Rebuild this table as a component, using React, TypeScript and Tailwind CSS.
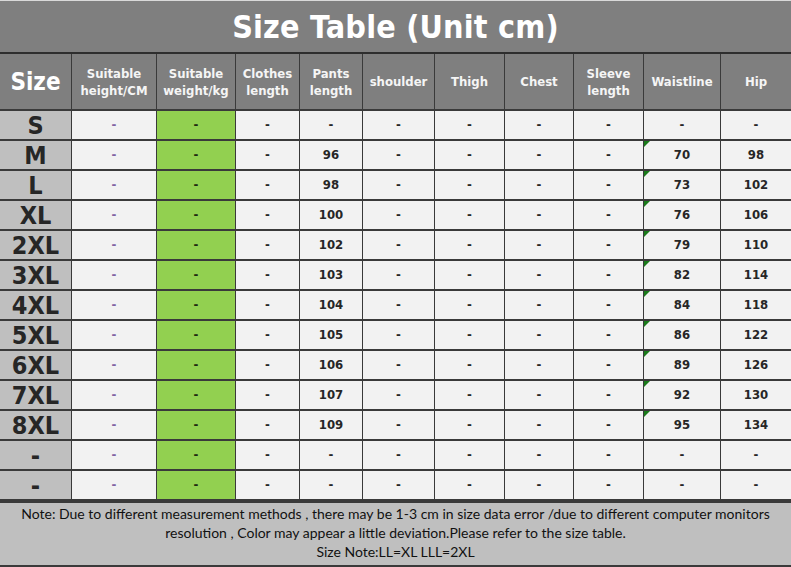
const cols = [
  'w-[72px]', 'w-[85px]', 'w-[79px]', 'w-[64px]', 'w-[63px]', 'w-[72px]',
  'w-[70px]', 'w-[69px]', 'w-[70px]', 'w-[77px]', 'w-[70px]',
];

const headers: string[][] = [
  ['Size'],
  ['Suitable', 'height/CM'],
  ['Suitable', 'weight/kg'],
  ['Clothes', 'length'],
  ['Pants', 'length'],
  ['shoulder'],
  ['Thigh'],
  ['Chest'],
  ['Sleeve', 'length'],
  ['Waistline'],
  ['Hip'],
];

type Row = { size: string; pants: string; waist: string; hip: string; mark: boolean };

const rows: Row[] = [
  { size: 'S', pants: '-', waist: '-', hip: '-', mark: false },
  { size: 'M', pants: '96', waist: '70', hip: '98', mark: true },
  { size: 'L', pants: '98', waist: '73', hip: '102', mark: true },
  { size: 'XL', pants: '100', waist: '76', hip: '106', mark: true },
  { size: '2XL', pants: '102', waist: '79', hip: '110', mark: true },
  { size: '3XL', pants: '103', waist: '82', hip: '114', mark: true },
  { size: '4XL', pants: '104', waist: '84', hip: '118', mark: true },
  { size: '5XL', pants: '105', waist: '86', hip: '122', mark: true },
  { size: '6XL', pants: '106', waist: '89', hip: '126', mark: true },
  { size: '7XL', pants: '107', waist: '92', hip: '130', mark: true },
  { size: '8XL', pants: '109', waist: '95', hip: '134', mark: true },
  { size: '-', pants: '-', waist: '-', hip: '-', mark: false },
  { size: '-', pants: '-', waist: '-', hip: '-', mark: false },
];

const tahoma = "font-['DejaVu_Sans_Condensed','DejaVu_Sans',sans-serif]";

function Cell({ i, className, children }: { i: number; className?: string; children?: React.ReactNode }) {
  return (
    <div
      className={`${cols[i]} relative shrink-0 flex items-center justify-center border-r border-[#3a3a3a] last:border-r-0 ${className ?? ''}`}
    >
      {children}
    </div>
  );
}

export default function App() {
  return (
    <div className={`w-[791px] h-[567px] bg-white ${tahoma}`}>
      <div className="h-[54px] bg-[#7f7f7f] border-t border-[#d9d9d9] border-b-2 border-b-[#2e2e2e] flex items-center justify-center">
        <h1 className="text-[32px] font-bold text-white tracking-[0.2px] leading-none">Size Table (Unit cm)</h1>
      </div>

      <div className="h-[57px] flex bg-[#7f7f7f] border-b-2 border-[#3a3a3a]">
        {headers.map((h, i) => (
          <Cell key={i} i={i}>
            {i === 0 ? (
              <span className="text-[24px] font-bold text-white">Size</span>
            ) : (
              <span className="text-[13px] font-bold text-[#f5f5f5] leading-[17px] text-center">
                {h.map((t, k) => (
                  <span key={k} className="block">{t}</span>
                ))}
              </span>
            )}
          </Cell>
        ))}
      </div>

      {rows.map((r, ri) => (
        <div key={ri} className="h-[30px] flex border-b-2 border-[#3a3a3a] last:border-b-0">
          <Cell i={0} className="bg-[#bfbfbf]">
            <span className="text-[25px] font-bold text-[#262626] leading-none">{r.size}</span>
          </Cell>
          <Cell i={1} className="bg-[#f2f2f2]">
            <span className="text-[13px] font-bold text-[#8064a2]">-</span>
          </Cell>
          <Cell i={2} className="bg-[#92d050]">
            <span className="text-[13px] font-bold text-[#1e2a10]">-</span>
          </Cell>
          <Cell i={3} className="bg-[#f2f2f2]"><span className="text-[13px] font-bold text-[#262626]">-</span></Cell>
          <Cell i={4} className="bg-[#f2f2f2]"><span className="text-[13px] font-bold text-[#262626]">{r.pants}</span></Cell>
          <Cell i={5} className="bg-[#f2f2f2]"><span className="text-[13px] font-bold text-[#262626]">-</span></Cell>
          <Cell i={6} className="bg-[#f2f2f2]"><span className="text-[13px] font-bold text-[#262626]">-</span></Cell>
          <Cell i={7} className="bg-[#f2f2f2]"><span className="text-[13px] font-bold text-[#262626]">-</span></Cell>
          <Cell i={8} className="bg-[#f2f2f2]"><span className="text-[13px] font-bold text-[#262626]">-</span></Cell>
          <Cell i={9} className="bg-[#f2f2f2]">
            {r.mark && (
              <span className="absolute left-0 top-0 w-0 h-0 border-t-[6px] border-t-[#1a7a1a] border-r-[6px] border-r-transparent" />
            )}
            <span className="text-[13px] font-bold text-[#262626]">{r.waist}</span>
          </Cell>
          <Cell i={10} className="bg-[#f2f2f2]"><span className="text-[13px] font-bold text-[#262626]">{r.hip}</span></Cell>
        </div>
      ))}

      <div className="h-[66px] bg-[#bfbfbf] border-t-2 border-[#3a3a3a] border-b-2 border-b-[#3a3a3a] pt-[1px] text-center font-['Lato',sans-serif] text-[14px] leading-[19px] text-[#111]">
        <p>Note: Due to different measurement methods , there may be 1-3 cm in size data error /due to different computer monitors</p>
        <p>resolution , Color may appear a little deviation.Please refer to the size table.</p>
        <p>Size Note:LL=XL LLL=2XL</p>
      </div>
    </div>
  );
}
